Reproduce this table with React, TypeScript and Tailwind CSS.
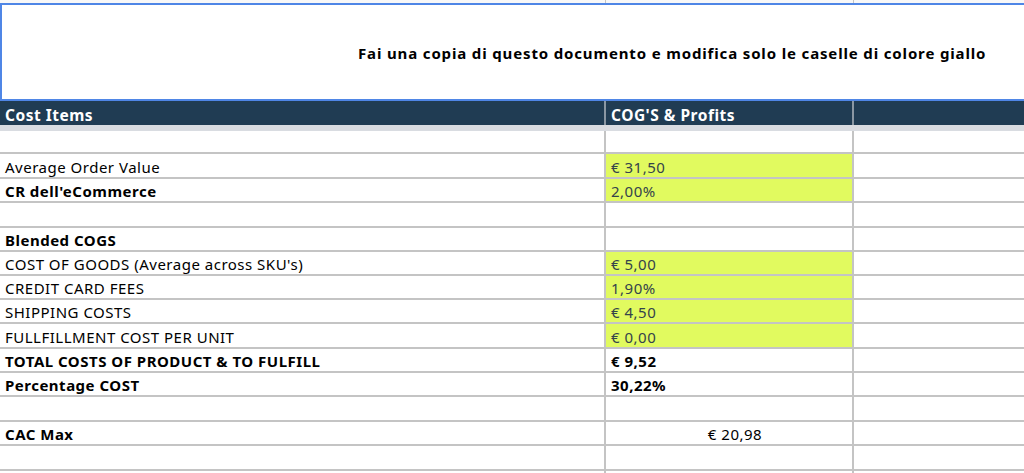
import React from "react";

type Row = {
  label: string;
  bold?: boolean;
  value?: string;
  valueBold?: boolean;
  yellow?: boolean;
  center?: boolean;
  h: number;
};

const rows: Row[] = [
  { label: "", h: 23 },
  { label: "Average Order Value", value: "€ 31,50", yellow: true, h: 25 },
  { label: "CR dell'eCommerce", bold: true, value: "2,00%", yellow: true, h: 24 },
  { label: "", h: 25 },
  { label: "Blended COGS", bold: true, h: 24 },
  { label: "COST OF GOODS (Average across SKU's)", value: "€ 5,00", yellow: true, h: 24 },
  { label: "CREDIT CARD FEES", value: "1,90%", yellow: true, h: 24 },
  { label: "SHIPPING COSTS", value: "€ 4,50", yellow: true, h: 24 },
  { label: "FULLFILLMENT COST PER UNIT", value: "€ 0,00", yellow: true, h: 25 },
  { label: "TOTAL COSTS OF PRODUCT & TO FULFILL", bold: true, value: "€ 9,52", valueBold: true, h: 24 },
  { label: "Percentage COST", bold: true, value: "30,22%", valueBold: true, h: 24 },
  { label: "", h: 25 },
  { label: "CAC Max", bold: true, value: "€ 20,98", center: true, h: 24 },
  { label: "", h: 25 },
  { label: "", h: 25 },
];

export default function App() {
  return (
    <div className="w-[1024px] h-[473px] overflow-hidden bg-white font-['Noto_Sans',sans-serif] text-[15px] tracking-[0.5px] text-black">
      {/* top thin row */}
      <div className="grid grid-cols-[606px_248px_170px] h-[3px] bg-[#f8f8f8]">
        <div className="border-r border-[#c4c4c4]" />
        <div className="border-r border-[#c4c4c4]" />
        <div />
      </div>
      {/* title merged row */}
      <div className="h-[98px] border-t-2 border-l-2 border-b-2 border-[#4f86e6] flex items-center pl-[356px]">
        <span className="font-bold text-[15px] tracking-[0.85px] pt-[3px]">
          Fai una copia di questo documento e modifica solo le caselle di colore giallo
        </span>
      </div>
      {/* header */}
      <div className="grid grid-cols-[606px_248px_170px] h-[24px] bg-[#203c53] text-white font-bold text-[15.5px]">
        <div className="border-r-2 border-[#8a97a3] flex items-end pl-[5px] leading-[20px]">Cost Items</div>
        <div className="border-r-2 border-[#8a97a3] flex items-end pl-[5px] leading-[20px]">COG'S &amp; Profits</div>
        <div />
      </div>
      <div className="h-[6px] bg-[#d9dce1]" />
      {rows.map((r, i) => (
        <div
          key={i}
          className="grid grid-cols-[606px_248px_170px] border-b-2 border-[#c4c4c4]"
          style={{ height: r.h }}
        >
          <div
            className={
              "border-r-2 border-[#c4c4c4] flex items-end pl-[5px] leading-[20px] whitespace-nowrap " +
              (r.bold ? "font-bold" : "font-normal")
            }
          >
            {r.label}
          </div>
          <div
            className={
              "border-r-2 border-[#c4c4c4] flex items-end leading-[20px] whitespace-nowrap " +
              (r.yellow ? "bg-[#e1fa5f] text-[#34434b] " : "") +
              (r.valueBold ? "font-bold text-black " : "") +
              (r.center ? "justify-center pl-[12px] text-black " : "pl-[5px] ")
            }
          >
            {r.value}
          </div>
          <div />
        </div>
      ))}
    </div>
  );
}
